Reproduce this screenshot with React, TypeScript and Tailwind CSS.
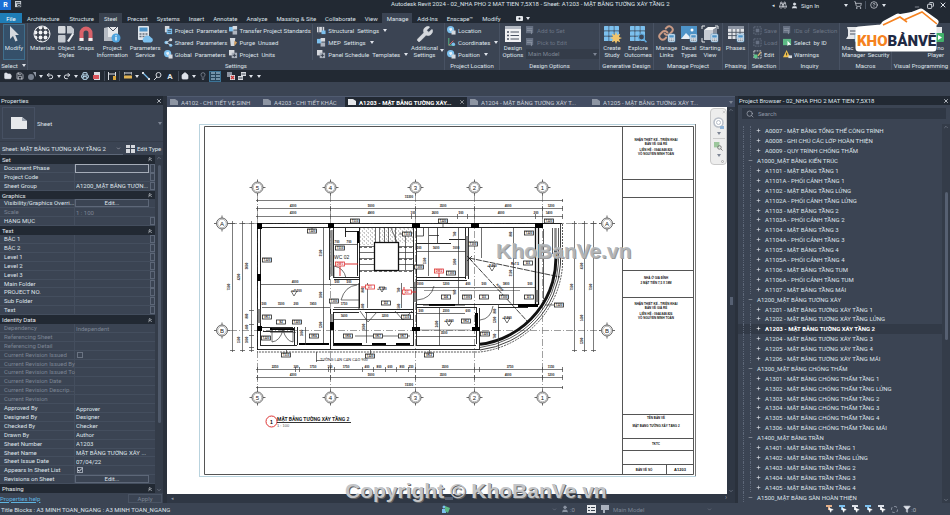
import React from "react";
import {
  Binoculars, Check, ChevronDown, ChevronUp, ChevronsUp, CircleHelp, Copy, Filter, FolderOpen, Home, Lightbulb,
  Link, Minus, MousePointer2, Plus, Printer, Redo2, Save, Search, ShoppingCart, Undo2, User, Wrench, X,
} from "lucide-react";

const Caret = ({ dim = false }: { dim?: boolean }) => (
  <svg viewBox="0 0 4 3" className={"h-[3px] w-1 shrink-0 " + (dim ? "fill-[#7d8594]" : "fill-[#dfe3ea]")}>
    <path d="M0 0h4L2 3z" />
  </svg>
);

/* ---------- large ribbon icons, 18 x 18 ---------- */
const G = "#d6d9de";
const B = "#7cc0ee";
const BadgeCalc = ({ x = 10, y = 9 }: { x?: number; y?: number }) => (
  <g transform={`translate(${x} ${y})`}>
    <rect width="7" height="8" rx="1" fill="#e8edf3" stroke="#4d93c8" strokeWidth=".6" />
    <rect x="1.2" y="1.2" width="4.6" height="2.4" fill="#4d93c8" />
    <path d="M1.2 5h4.6M1.2 6.6h4.6" stroke="#66717f" strokeWidth=".8" strokeDasharray="1.2 .5" />
  </g>
);
const gridCells = (color: string) =>
  [0, 1, 2].flatMap((r) => [0, 1, 2].map((c) => (
    <rect key={`${r}${c}`} x={1 + c * 5.2} y={1 + r * 5.2} width="4.6" height="4.6" rx=".6" fill={color} />
  )));
const bigIcons: Record<string, React.ReactNode> = {
  modify: <path d="M5 1v13l3-3 2.4 5.4 2.2-1L10.300 10H14z" fill={G} />,
  materials: (
    <>
      <defs>
        <pattern id="chk" width="5" height="5" patternUnits="userSpaceOnUse">
          <rect width="5" height="5" fill="#39404c" />
          <circle cx="2.500" cy="2.500" r="1.900" fill="#f2f3f5" />
        </pattern>
      </defs>
      <circle cx="9" cy="9" r="8" fill="url(#chk)" stroke="#e3e5e9" strokeWidth="1" />
    </>
  ),
  styles: (
    <>
      <rect x="1" y="1" width="7.500" height="7.500" rx="1" fill={G} />
      <path d="M10 1h4l3 3v4.500h-7z" fill="#c3c8cf" />
      <rect x="1" y="10" width="7.500" height="7.500" rx="1" fill="#c3c8cf" />
      <path d="M10 16l5.500-8 1.500 1-5 8z" fill="#eef0f3" />
    </>
  ),
  snaps: (
    <>
      <path d="M4.500 16V8a4.500 4.500 0 0 1 9 0v8" fill="none" stroke="#d9626a" strokeWidth="4" />
      <path d="M2.500 14.500h4M11.500 14.500h4" stroke="#f0f0f0" strokeWidth="3" />
    </>
  ),
  info: (
    <>
      <path d="M1 3l4-1h10l-3 3v11H1z" fill="#b6bbc3" />
      <path d="M5 2h10v10H5z" fill="#e6e8eb" />
      <path d="M6 2l4 4 4-4" stroke="#4a5261" fill="none" />
      <circle cx="13" cy="13" r="4.500" fill="#4fa3dd" />
      <path d="M13 12v3.500M13 10.300v1" stroke="#fff" strokeWidth="1.300" />
    </>
  ),
  service: (
    <>
      <rect x="2" y="1" width="11" height="14" rx="1" fill="#dfe4ea" />
      <rect x="3.500" y="2.500" width="8" height="4" fill="#4d93c8" />
      <path d="M3.500 9h8M3.500 11.500h8" stroke="#66717f" strokeWidth="1.300" strokeDasharray="2 1" />
      <path d="M8 17.500a3 3 0 0 1 0-5 4 4 0 0 1 7 0 2.600 2.600 0 0 1 0 5z" fill={B} />
    </>
  ),
  options: (
    <>
      <rect x="1" y="1" width="16" height="16" fill="#f0f1f3" />
      <rect x="1" y="1" width="16" height="3" fill="#b4bac4" />
      <path d="M3 7h2M3 10.500h2M3 14h2" stroke="#4a5261" strokeWidth="1.500" />
      <path d="M6.500 7H15M6.500 10.500H15M6.500 14H15" stroke="#4a5261" strokeWidth="1" />
    </>
  ),
  study: (
    <>
      {gridCells(B)}
      <path d="M13 7l1.200 3 3-1.200L16 12l3 1-3 1.200 1.200 3-3-1.200L13 19l-1.200-3-3 1.200L10 14l-3-1 3-1.200L8.800 8.800l3 1.200z" fill="#f0c46c" />
    </>
  ),
  explore: (
    <>
      {gridCells(B)}
      <circle cx="12.500" cy="12" r="3" fill="#3d4656" stroke="#5fa9dc" strokeWidth="1.200" />
      <path d="M14.800 14.500l2.700 2.700" stroke="#5fa9dc" strokeWidth="1.600" />
    </>
  ),
  decal: (
    <>
      <rect x="1" y="1" width="16" height="13" fill="#4d93c8" />
      <path d="M1 14l5-6 4 4 3-2 4 4z" fill="#e7eef5" />
      <circle cx="12" cy="5" r="1.500" fill="#fff" />
      <BadgeCalc />
    </>
  ),
  starting: (
    <>
      <path d="M3 5l4-3h9l-4 3z" fill="#f3f4f6" />
      <path d="M3 5h9v10H3z" fill="#c8ccd3" />
      <path d="M12 5l4-3v9l-4 4z" fill="#8b93a0" />
      <path d="M1 4V1h3M14 1h3v3M1 13v4h3" stroke="#e5e7ea" fill="none" />
      <BadgeCalc />
    </>
  ),
  phases: (
    <>
      <rect x="1" y="1" width="16" height="13" fill="#e2e4e8" />
      <rect x="1" y="1" width="16" height="3" fill="#8d95a3" />
      <path d="M1 7.300h16M1 10.600h16M5 4v10M9 4v10M13 4v10" stroke="#4a5261" strokeWidth=".9" />
      <BadgeCalc />
    </>
  ),
  macro: (
    <>
      <path d="M2 2h12l-2 3v9H1l2-3V5z" fill="#e4e6e9" />
      <path d="M5 6h6M5 9h6" stroke="#4a5261" />
      <BadgeCalc />
    </>
  ),
  player: (
    <>
      <rect x="1" y="2" width="14" height="14" fill="#e4e6e9" />
      <rect x="8" y="8" width="9" height="9" rx="1" fill="#41b06a" />
      <path d="M11 10l4 2.500-4 2.500z" fill="#fff" />
    </>
  ),
};
const BigIcon = ({ name }: { name: string }) => {
  if (name === "wrench") return <Wrench className="size-[18px] fill-[#d6d9de] text-[#d6d9de]" strokeWidth={1} />;
  if (name === "links")
    return (
      <span className="relative size-[18px]">
        <Link className="size-4 text-[#c99a85]" strokeWidth={3} />
        <svg viewBox="0 0 18 18" className="absolute inset-0 size-[18px]"><BadgeCalc /></svg>
      </span>
    );
  return <svg viewBox="0 0 18 18" className="size-[18px] overflow-visible">{bigIcons[name]}</svg>;
};

/* ---------- small ribbon icons, 10 x 10 ---------- */
const smallIcons: Record<string, React.ReactNode> = {
  doc: <><rect x="1" y="0" width="5" height="7" fill={G} /><rect x="3" y="3" width="6" height="6" fill={B} /><path d="M4 5h4M4 7h4" stroke="#39424f" strokeWidth=".8" /></>,
  share: <><circle cx="2.500" cy="5" r="2" fill={B} /><circle cx="7.500" cy="2" r="1.700" fill={G} /><circle cx="7.500" cy="8" r="1.700" fill={B} /><path d="M2 5l6-3M2 5l6 3" stroke={G} /></>,
  globe: <><circle cx="4" cy="4" r="4" fill={B} /><path d="M2 3l3-1 1 2-2 2z" fill="#e7f2fa" /><rect x="5" y="5" width="4.500" height="4.500" fill={G} /></>,
  transfer: <><rect x="0" y="1" width="5" height="5" fill={B} /><rect x="4" y="0" width="5" height="4" fill={G} /><rect x="4" y="5" width="5" height="4.500" fill="#aeb4be" /></>,
  purge: <><path d="M1 0h6l-1 9H2z" fill={G} /><path d="M6 3l3 2-3 4z" fill="#d8a05c" /></>,
  units: <><rect x="0" y="0" width="6" height="6" fill={G} /><rect x="3" y="3" width="6" height="6" fill="#a9b0bb" /><path d="M4 6h4M6 4v4" stroke="#39424f" /></>,
  frame: <><rect x="0" y="1" width="8" height="6" fill={G} /><path d="M2 1v8M6 1v8" stroke="#566072" /><rect x="5" y="5" width="4.500" height="4" fill={B} /></>,
  coord: <><path d="M2 0v8h7" stroke="#5ec48b" fill="none" /><path d="M2 8l5-5" stroke="#d66" /><circle cx="7" cy="7" r="2" fill={B} /></>,
  dimSet: <><rect x="0" y="0" width="8" height="8" fill="#667082" /><path d="M1 3h6M1 5h6M6 5v4" stroke="#8a92a0" /></>,
  edit: <><rect x="1" y="1" width="8" height="8" fill="none" stroke={G} strokeDasharray="2 1" /><rect x="1" y="5" width="4" height="4" fill="#5ec48b" /><path d="M5 6l3-4 1 1-3 4z" fill="#e3b870" /></>,
  dimEdit: <><rect x="1" y="1" width="8" height="8" fill="none" stroke="#667082" strokeDasharray="2 1" /><rect x="3" y="3" width="4" height="4" fill="#667082" /></>,
  select: <><rect x="0" y="1" width="9" height="7" fill="#5cb985" /><path d="M5 3v6l1.500-1.500H9z" fill="#fff" /></>,
  warn: <><path d="M4 0l4 8H0z" fill="#f0c04c" /><path d="M4 3v3" stroke="#333" /><rect x="6" y="6" width="4" height="3" fill={G} /></>,
};
const SmallIcon = ({ name }: { name: string }) => (
  <svg viewBox="0 0 10 10" className="size-[9px] shrink-0">{smallIcons[name]}</svg>
);

const Big = ({ icon, lines, width, active = false, align = "items-center" }: { icon: string; lines: string[]; width: string; active?: boolean; align?: string }) => (
  <button className={`flex h-9 flex-col items-center whitespace-nowrap text-center leading-[7px] ${width} ${active ? "border border-[#3f6e8c] bg-[#35506a]" : "pt-px"}`}>
    <BigIcon name={icon} />
    <span className={`mt-px flex flex-col ${align}`}>{lines.map((l) => <span key={l} className="min-h-[7px]">{l}</span>)}</span>
  </button>
);
const Small = ({ icon, text, caret = false, dim = false }: { icon: string; text: string; caret?: boolean; dim?: boolean }) => (
  <button className={"flex h-3 items-center gap-[2px] whitespace-pre " + (dim ? "text-[#6b7484]" : "")}>
    <SmallIcon name={icon} />
    <span>{text}</span>
    {caret && <span className="pl-[2px]"><Caret /></span>}
  </button>
);
const Group = ({ label, width, children }: { label: string; width: string; children: React.ReactNode }) => (
  <section className={`flex shrink-0 flex-col overflow-hidden border-r border-[#485263] ${width}`} aria-label={label}>
    <div className="flex h-[37px] pt-px">{children}</div>
    <div className="flex h-[10px] items-center justify-center gap-1 whitespace-nowrap">{label}{label === "Select" && <Caret />}</div>
  </section>
);

const Ribbon = () => (
  <div className="flex h-[47px] shrink-0 overflow-hidden bg-[#3b4453]">
    <Group label="Select" width="w-7">
      <div className="pl-[3px]"><Big icon="modify" lines={["Modify"]} width="w-[22px]" active /></div>
    </Group>
    <Group label="Settings" width="w-[417px]">
      <Big icon="materials" lines={["Materials"]} width="w-[29px]" />
      <Big icon="styles" lines={["Object", "Styles"]} width="w-[19px]" />
      <Big icon="snaps" lines={["Snaps"]} width="w-[20px]" />
      <Big icon="info" lines={["Project", "Information"]} width="w-[33px]" />
      <Big icon="service" lines={["Parameters", "Service"]} width="w-[33px]" />
      <div className="flex w-[67px] flex-col pl-[2px]">
        <Small icon="doc" text="Project  Parameters" />
        <Small icon="share" text="Shared  Parameters" />
        <Small icon="globe" text="Global  Parameters" />
      </div>
      <div className="flex w-[85px] flex-col border-r border-[#485263]">
        <Small icon="transfer" text="Transfer Project Standards" />
        <Small icon="purge" text="Purge  Unused" />
        <Small icon="units" text="Project  Units" />
      </div>
      <div className="flex w-[96px] flex-col pl-1">
        <Small icon="frame" text="Structural  Settings" caret />
        <Small icon="transfer" text="MEP  Settings" caret />
        <Small icon="units" text="Panel Schedule  Templates" caret />
      </div>
      <Big icon="wrench" lines={["Additional", "Settings"]} width="w-[31px]" />
      <div className="flex items-end pb-2"><Caret /></div>
    </Group>
    <Group label="Project Location" width="w-[55px]">
      <div className="flex flex-col pl-[2px]">
        <Small icon="globe" text="Location" />
        <Small icon="coord" text="Coordinates" caret />
        <Small icon="globe" text="Position" caret />
      </div>
    </Group>
    <Group label="Design Options" width="w-[100px]">
      <Big icon="options" lines={["Design", "Options"]} width="w-[26px]" />
      <div className="flex flex-1 flex-col">
        <Small icon="dimSet" text="Add to Set" dim />
        <Small icon="dimSet" text="Pick to Edit" dim />
        <div className="relative flex h-3 items-center">
          <select aria-label="Active design option" className="h-[10px] w-full appearance-none bg-[#343c49] pl-[2px] text-[6px] leading-[10px] text-[#7d8594]">
            <option>Main Model</option>
          </select>
          <span className="absolute right-[2px]"><Caret dim /></span>
        </div>
      </div>
    </Group>
    <Group label="Generative Design" width="w-[54px]">
      <Big icon="study" lines={["Create", "Study"]} width="w-[24px]" />
      <Big icon="explore" lines={["Explore", "Outcomes"]} width="w-[28px]" />
    </Group>
    <Group label="Manage Project" width="w-[69px]">
      <Big icon="links" lines={["Manage", "Links"]} width="w-[25px]" />
      <Big icon="decal" lines={["Decal", "Types"]} width="w-[20px]" />
      <Big icon="starting" lines={["Starting", "View"]} width="w-[22px]" />
    </Group>
    <Group label="Phasing" width="w-[26px]">
      <Big icon="phases" lines={["Phases"]} width="w-[25px]" />
    </Group>
    <Group label="Selection" width="w-[31px]">
      <div className="flex flex-col pl-1">
        <Small icon="dimEdit" text="Save" dim />
        <Small icon="dimEdit" text="Load" dim />
        <Small icon="edit" text="Edit" />
      </div>
    </Group>
    <Group label="Inquiry" width="w-[60px]">
      <div className="flex flex-col pl-[3px]">
        <Small icon="dimSet" text="IDs of  Selection" dim />
        <Small icon="select" text="Select  by ID" />
        <Small icon="warn" text="Warnings" />
      </div>
    </Group>
    <Group label="Macros" width="w-[52px]">
      <Big icon="macro" lines={["Mac", "Manager"]} width="w-[27px]" align="items-start" />
      <Big icon="macro" lines={["", "Security"]} width="w-[23px]" />
    </Group>
    <Group label="Visual Programming" width="w-[59px]">
      <span className="w-[30px]" />
      <Big icon="player" lines={["no", "Player"]} width="w-[29px]" align="items-end" />
    </Group>
  </div>
);

const menuTabs = ["Architecture", "Structure", "Steel", "Precast", "Systems", "Insert", "Annotate", "Analyze", "Massing & Site", "Collaborate", "View", "Manage", "Add-Ins", "Enscape™", "Modify"];

const TitleBar = () => (
  <header className="flex h-[13px] shrink-0 items-start bg-[#222933]">
    <div className="flex w-[391px] items-start gap-1">
      <span className="flex h-[10px] w-[11px] items-center justify-center bg-[#1c6fd6] text-[7px] font-bold text-white">R</span>
      <svg viewBox="0 0 8 8" className="mt-[1px] size-[7px]"><path d="M0 0h7v7H0z" fill="#c9ced6" /><path d="M1 2h5M3 4h3v2H3z" stroke="#222933" fill="none" /></svg>
    </div>
    <h1 className="h-[9px] whitespace-nowrap leading-[8px]">Autodesk Revit 2024 - 02_NHA PHO 2 MAT TIEN 7,5X18 - Sheet: A1203 - MẶT BẰNG TƯỜNG XÂY TẦNG 2</h1>
    <div className="ml-auto flex h-[10px] items-center pr-[3px]">
      <button aria-label="Collapse search" className="w-[7px] text-[5px]">◂</button>
      <button aria-label="Find" className="w-3"><Binoculars className="mx-auto size-2" /></button>
      <button className="flex w-[55px] items-center gap-[3px] pl-[2px]"><User className="size-[7px] fill-current" />Sign In</button>
      <button aria-label="Account menu" className="w-[10px]"><Caret /></button>
      <button aria-label="Cart" className="w-3 border-r border-[#4a5362]"><ShoppingCart className="size-2" /></button>
      <button aria-label="Help" className="w-[14px] pl-1"><CircleHelp className="size-2" /></button>
      <button aria-label="Help menu" className="w-[34px] pl-[2px]"><Caret /></button>
      <button aria-label="Minimize" className="w-[13px]"><Minus className="mt-1 size-[6px]" /></button>
      <button aria-label="Restore" className="w-3"><Copy className="size-[7px] -scale-x-100" strokeWidth={3} /></button>
      <button aria-label="Close" className="w-2"><X className="size-2" strokeWidth={3} /></button>
    </div>
  </header>
);

const MenuBar = () => (
  <nav className="flex h-[10px] shrink-0 items-stretch whitespace-nowrap bg-[#222933]">
    <button className="w-[22px] bg-[#1f7db6] text-white">File</button>
    {menuTabs.map((t, i) => (
      <button key={t} className={"pl-[5px] " + (i < 3 ? "pr-[5px] " : "pr-1 ") + (t === "Steel" ? "bg-[#39414e]" : t === "Manage" ? "bg-[#3b4453]" : "")}>{t}</button>
    ))}
    <button aria-label="Display options" className="flex items-center gap-[3px] pl-[11px]">
      <svg viewBox="0 0 7 5" className="h-[5px] w-[7px]"><rect width="7" height="5" rx="1" fill="#e5e8ec" /><circle cx="3.500" cy="2.500" r="1" fill="#222933" /></svg>
      <Caret />
    </button>
  </nav>
);

const Tool = ({ label, width, on = false, children }: { label: string; width: string; on?: boolean; children: React.ReactNode }) => (
  <button aria-label={label} className={`flex h-[11px] items-center justify-center ${width} ${on ? "border border-[#3b7396] bg-[#27445a]" : ""}`}>{children}</button>
);
const Rule = ({ width }: { width: string }) => <span className={`flex h-[10px] justify-center ${width}`}><span className="w-px bg-[#434c5a]" /></span>;

const QuickAccess = () => (
  <div className="flex h-3 shrink-0 items-center bg-[#222933] pl-[2px]">
    <Tool label="Open" width="w-3"><FolderOpen className="size-2 fill-[#dfe3ea]" /></Tool>
    <Tool label="Save" width="w-3"><Save className="size-2" /></Tool>
    <Tool label="Synchronize" width="w-3"><svg viewBox="0 0 8 8" className="size-2"><circle cx="3" cy="5" r="3" fill="#78818f" /><path d="M5 0h3v5z" fill="#9098a5" /></svg></Tool>
    <Tool label="Synchronize menu" width="w-[6px]"><Caret /></Tool>
    <Tool label="Undo" width="w-3"><Undo2 className="size-2" strokeWidth={3} /></Tool>
    <Tool label="Undo menu" width="w-[5px]"><Caret /></Tool>
    <Tool label="Redo" width="w-3"><Redo2 className="size-2" strokeWidth={3} /></Tool>
    <Tool label="Redo menu" width="w-[6px]"><Caret /></Tool>
    <Tool label="Print" width="w-3"><Printer className="size-2 text-[#bfe0f5]" strokeWidth={3} /></Tool>
    <Tool label="Export PDF" width="w-[11px]"><svg viewBox="0 0 8 8" className="size-2"><path d="M1 0h6v8H1z" fill="#dadde2" /><path d="M0 3h6v4H0z" fill="#d8535a" /></svg></Tool>
    <Rule width="w-1" />
    <Tool label="Aligned dimension" width="w-[11px]"><svg viewBox="0 0 8 8" className="size-2"><path d="M.5 0v8M7.500 0v5M0 2h8" stroke={G} fill="none" /><path d="M5 4h3v4H5z" fill="#d9a63c" /></svg></Tool>
    <Rule width="w-1" />
    <Tool label="Measure" width="w-[13px]"><svg viewBox="0 0 8 8" className="size-2"><path d="M0 1h8M0 0v3M8 0v3" stroke={G} /><rect y="3.500" width="8" height="3" fill="#e0b355" /></svg></Tool>
    <Tool label="Measure menu" width="w-[6px]"><Caret /></Tool>
    <Tool label="Detail line" width="w-3"><svg viewBox="0 0 8 8" className="size-2"><path d="M1 1l6 6" stroke="#7cc0ee" strokeWidth="1.200" /><rect width="2" height="2" fill={G} /><rect x="6" y="6" width="2" height="2" fill={G} /></svg></Tool>
    <Tool label="Tag" width="w-3"><svg viewBox="0 0 8 8" className="size-2"><circle cx="4.500" cy="3" r="2.500" fill="none" stroke={G} /><path d="M0 8l3-3" stroke={G} /></svg></Tool>
    <Tool label="Text" width="w-3"><span className="text-[8px] font-bold">A</span></Tool>
    <Rule width="w-1" />
    <Tool label="Default 3D view" width="w-[10px]"><Home className="size-2 fill-[#dfe3ea]" /></Tool>
    <Tool label="3D menu" width="w-[7px]"><Caret /></Tool>
    <Tool label="Section" width="w-3"><Lightbulb className="size-2 text-[#9aa2af]" /></Tool>
    <Tool label="Thin lines" width="w-[12px]" on><svg viewBox="0 0 9 8" className="h-2 w-[9px]"><path d="M0 1h4M5 1h4M0 4h4M5 4h4M0 7h4M5 7h4" stroke="#bfe0f5" strokeWidth="1.200" /></svg></Tool>
    <span className="w-1" />
    <Tool label="Close inactive" width="w-[11px]"><svg viewBox="0 0 8 8" className="size-2"><path d="M0 0h5v5H0z" fill="#8b93a0" /><path d="M3 3h5v5H3z" fill={G} /><path d="M4 4l3 3M7 4L4 7" stroke="#c33" strokeWidth="1.200" /></svg></Tool>
    <Tool label="Switch windows" width="w-3"><svg viewBox="0 0 8 8" className="size-2"><path d="M3 0h5v4H3zM0 4h5v4H0z" fill={G} /><path d="M3.500 2h4M.5 6h4" stroke="#39424f" /></svg></Tool>
    <Tool label="Windows menu" width="w-[6px]"><Caret /></Tool>
    <Tool label="Customize" width="w-[10px]"><Caret /></Tool>
  </div>
);

/* ---------- properties palette ---------- */
type Row = { l: string; v?: string; k?: "head" | "edit" | "check" | "dim" | "dimcheck"; b?: boolean; active?: boolean };
const rows: Row[] = [
  { l: "Set", k: "head" },
  { l: "Document Phase", b: true, active: true }, { l: "Project Code", b: true }, { l: "Sheet Group", v: "A1200_MẶT BẰNG TƯỜN...", b: true },
  { l: "Graphics", k: "head" },
  { l: "Visibility/Graphics Overri...", k: "edit" }, { l: "Scale", v: "1 : 100", k: "dim" }, { l: "HẠNG MỤC", b: true },
  { l: "Text", k: "head" },
  { l: "BẬC 1", b: true }, { l: "BẬC 2", b: true }, { l: "Level 1", b: true }, { l: "Level 2", b: true }, { l: "Level 3", b: true },
  { l: "Main Folder", b: true }, { l: "PROJECT NO.", b: true }, { l: "Sub Folder", b: true }, { l: "Text", b: true },
  { l: "Identity Data", k: "head" },
  { l: "Dependency", v: "Independent", k: "dim" }, { l: "Referencing Sheet", k: "dim" }, { l: "Referencing Detail", k: "dim" },
  { l: "Current Revision Issued", k: "dimcheck" }, { l: "Current Revision Issued By", k: "dim" }, { l: "Current Revision Issued To", k: "dim" },
  { l: "Current Revision Date", k: "dim" }, { l: "Current Revision Descrip...", k: "dim" }, { l: "Current Revision", k: "dim" },
  { l: "Approved By", v: "Approver" }, { l: "Designed By", v: "Designer" }, { l: "Checked By", v: "Checker" }, { l: "Drawn By", v: "Author" },
  { l: "Sheet Number", v: "A1203" }, { l: "Sheet Name", v: "MẶT BẰNG TƯỜNG XÂY ..." }, { l: "Sheet Issue Date", v: "07/04/22" },
  { l: "Appears In Sheet List", k: "check" }, { l: "Revisions on Sheet", k: "edit" },
  { l: "Phasing", k: "head" },
];

const PropertyRow = ({ row, index }: { row: Row; index: number }) => {
  const id = `prop-${index}`;
  if (row.k === "head")
    return (
      <div className="flex min-h-0 items-center justify-between bg-[#222933] pl-[2px] pr-[2px] text-[#e6e9ee]">
        {row.l}<ChevronsUp className="size-[6px]" strokeWidth={3} />
      </div>
    );
  const dim = row.k === "dim" || row.k === "dimcheck";
  return (
    <div className={"grid min-h-0 grid-cols-[75px_74px_6px] items-stretch border-b border-[#444e5e] leading-[8px] " + (dim ? "text-[#7b8493]" : "text-[#dfe3ea]")}>
      <label htmlFor={id} className="whitespace-nowrap border-r border-[#444e5e] pl-1">{row.l}</label>
      {row.k === "edit" ? (
        <button id={id} className="border border-[#5d6778] text-center leading-[6px]">Edit...</button>
      ) : row.k === "check" || row.k === "dimcheck" ? (
        <span className="relative flex items-center pl-[2px]">
          <input id={id} type="checkbox" defaultChecked={row.k === "check"} className={"size-[6px] appearance-none border " + (dim ? "border-[#6a7382]" : "border-[#9aa2af]")} />
          {row.k === "check" && <Check className="pointer-events-none absolute left-[2px] size-[6px]" strokeWidth={4} />}
        </span>
      ) : (
        <input id={id} defaultValue={row.v ?? ""} readOnly={dim} className={"h-full min-w-0 bg-transparent pl-px text-[6px] leading-[8px] outline-none " + (row.active ? "border border-[#a5acb8]" : "")} />
      )}
      {row.b ? <button aria-label={`Associate ${row.l}`} className="ml-px border border-[#5d6778]" /> : <span />}
    </div>
  );
};

const Properties = () => (
  <aside className="flex w-[163px] shrink-0 flex-col bg-[#3b4453]" aria-label="Properties">
    <div className="flex h-[9px] items-center justify-between bg-[#222933] px-px">Properties<button aria-label="Close properties"><X className="size-[6px]" strokeWidth={3} /></button></div>
    <div className="flex h-[36px] items-center pl-[2px] pr-px">
      <span className="flex h-8 w-[33px] items-center justify-center border border-[#465062]">
        <svg viewBox="0 0 16 12" className="h-3 w-4"><path d="M0 0h11l5 4v8H0z" fill="#e6e8eb" /><path d="M11 0v4h5" fill="#9aa2af" /></svg>
      </span>
      <span className="flex-1 pl-[2px]">Sheet</span><Caret dim />
    </div>
    <div className="flex h-[14px] items-center border-t border-[#343c49]">
      <div className="relative ml-px flex w-[122px] items-center border-b border-[#5d6778]">
        <select aria-label="Instance" className="h-[11px] w-full appearance-none bg-transparent pl-px text-[6px] text-[#dfe3ea]"><option>Sheet: MẶT BẰNG TƯỜNG XÂY TẦNG 2</option></select>
        <ChevronDown className="pointer-events-none absolute right-[2px] size-[5px]" />
      </div>
      <button className="flex items-center gap-[2px] whitespace-nowrap pl-[3px]">
        <svg viewBox="0 0 9 8" className="h-2 w-[9px]"><path d="M0 0h4v3H0zM0 4h4v4H0zM5 0h4v3H5zM5 4h4v4H5z" fill={G} /></svg>Edit Type
      </button>
    </div>
    <div className="flex min-h-0 flex-1">
      <div className="grid min-w-0 flex-1 auto-rows-fr">
        {rows.map((r, i) => <PropertyRow key={i} row={r} index={i} />)}
      </div>
      <div className="flex w-2 flex-col items-center bg-[#343c49]">
        <ChevronUp className="size-[6px] shrink-0 text-[#8d95a3]" />
        <span className="mt-1 h-[258px] w-[3px] rounded bg-[#4f596a]" />
        <ChevronDown className="mt-auto size-[6px] shrink-0 text-[#8d95a3]" />
      </div>
    </div>
    <div className="flex h-[10px] shrink-0 items-center justify-between pr-px">
      <a href="#help" className="text-[#5fb4e0] underline">Properties help</a>
      <button className="h-[9px] w-[34px] border border-[#4a5464] leading-[7px] text-[#7b8493]">Apply</button>
    </div>
  </aside>
);

/* ---------- sheet drawing ---------- */
const axes = [[257, "5"], [330, "4"], [415, "3"], [474, "2"], [542, "1"]] as const;
const Bubble = ({ x, y, t }: { x: number; y: number; t: string }) => (
  <g stroke="#444" fill="#fff" strokeWidth=".8">
    <path d={`M${x - 8} ${y}h16M${x} ${y - 8}v16`} />
    <circle cx={x} cy={y} r="5.500" />
    <circle cx={x} cy={y} r="4.300" strokeWidth=".4" />
    <text x={x} y={y + 2} fontSize="6" textAnchor="middle" fill="#222" stroke="none">{t}</text>
  </g>
);
const dims: [number, number, string][] = [
  [409, 198, "15300"], [293, 207, "4300"], [371, 207, "5000"], [443, 207, "3500"], [508, 207, "4000"], [551, 207, "1200"],
  [293, 214, "4300"], [371, 214, "4900"], [413, 214, "100"], [435, 214, "2600"], [461, 214, "500"], [501, 214, "4000"], [536, 214, "200"], [549, 214, "1400"],
  [275, 368, "2250"], [296, 368, "300"], [313, 368, "1750"], [330, 368, "100"], [346, 368, "1750"], [367, 368, "400"], [379, 368, "800"], [390, 368, "600"], [402, 368, "800"], [411, 368, "250"],
  [445, 368, "3500"], [510, 368, "3750"], [551, 368, "1150"],
  [293, 376, "4300"], [371, 376, "5000"], [443, 376, "3500"], [508, 376, "4000"], [551, 376, "1200"], [409, 386, "15300"],
  [264, 305, "500"], [281, 305, "1500"], [296, 305, "200"], [313, 305, "1950"], [344, 305, "1750"], [295, 283, "4000"], [337, 283, "500"], [349, 283, "500"],
  [344, 317, "1600"], [385, 317, "3200"], [337, 243, "700"], [349, 243, "700"],
  [419, 249, "500"], [436, 249, "1600"], [456, 249, "1000"], [420, 285, "1000"], [446, 285, "1200"], [468, 285, "400"], [484, 285, "500"], [506, 285, "1800"], [530, 285, "500"],
  [421, 312, "500"], [446, 312, "2300"], [468, 312, "600"], [444, 334, "3500"],
];
const vdims: [number, number, string][] = [
  [230, 287, "7500"], [240, 277, "4200"], [248, 266, "3600"], [240, 340, "1500"], [248, 316, "800"], [248, 327, "400"], [248, 340, "1000"],
  [322, 253, "3100"], [322, 295, "1000"], [322, 325, "1200"], [303, 333, "1000"], [365, 327, "1600"], [364, 290, "800"], [400, 290, "700"], [364, 306, "400"], [400, 306, "500"],
  [438, 324, "2400"], [456, 234, "700"], [456, 262, "1800"], [426, 261, "1500"], [512, 234, "800"], [512, 273, "3100"], [496, 311, "800"], [496, 320, "1200"], [496, 336, "700"], [456, 292, "900"],
  [573, 287, "7500"], [583, 266, "4500"], [592, 287, "7500"], [583, 318, "1400"], [583, 341, "1200"],
];
const tags: [number, number, string, string?][] = [
  [312, 231, "T220"], [267, 260, "T220"], [355, 221, "T110"], [340, 248, "T110"], [407, 234, "T110"], [334, 301, "T100"], [386, 303, "D2"], [281, 322, "S2"], [297, 322, "T220"], [267, 317, "VK1"], [266, 338, "T220"],
  [314, 336, "VK6"], [348, 336, "VK6"], [378, 336, "VK7"], [403, 336, "VK7"], [286, 355, "T110"], [370, 356, "T220"], [406, 317, "T110"],
  [340, 264, "DW1", "r"], [370, 287, "D1", "r"], [407, 292, "D1'", "r"], [439, 271, "DW2", "r"],
  [443, 221, "T220"], [549, 221, "T220"], [473, 244, "T100"], [529, 233, "T220"], [419, 267, "T100"], [451, 273, "T100"], [528, 263, "D3"], [446, 297, "D4"], [467, 297, "T100"], [484, 297, "D3"], [504, 297, "T100"], [529, 297, "D1"],
  [559, 305, "T220"], [466, 321, "VK2"], [485, 334, "T220"], [429, 355, "VK3"],
];
const tb: [number, string][] = [
  [141, "NHẬN THIẾT KẾ - TRIỂN KHAI"], [145, "BẢN VẼ GIÁ RẺ"], [151, "LIÊN HỆ : 0944.848.826"], [155, "VÕ NGUYỄN MINH TOÀN"],
  [279, "NHÀ Ở GIA ĐÌNH"], [284, "2 MẶT TIỀN  7,5 X 18M"],
  [305, "NHẬN THIẾT KẾ - TRIỂN KHAI"], [309, "BẢN VẼ GIÁ RẺ"], [315, "LIÊN HỆ : 0944.848.826"], [319, "VÕ NGUYỄN MINH TOÀN"],
  [419, "TÊN BẢN VẼ"], [427, "MẶT BẰNG TƯỜNG XÂY TẦNG 2"], [445, "TKTC"],
];

const FloorPlan = () => (
  <svg viewBox="167 107 560 387" className="h-full w-full font-['Liberation_Sans',sans-serif]" role="img" aria-label="Sheet A1203">
    <defs>
      <pattern id="dots" width="4" height="4" patternUnits="userSpaceOnUse">
        <path d="M0 1h.8M2 3h.8M3 0h.6" stroke="#555" strokeWidth=".8" />
      </pattern>
    </defs>
    <rect x="199.500" y="124.500" width="496" height="352" fill="#fff" stroke="#b9d3de" />
    <path d="M695.500 124v352" stroke="#777" />
    <path d="M204.500 126.500h489v348h-489zM622.500 127v347M622.500 179.500h71M622.500 197.500h71M622.500 270.500h71M622.500 297.500h71M622.500 414.500h71M622.500 438.500h71M622.500 450.500h71M622.500 464.500h71M666.500 464v10" fill="none" stroke="#555" />
    {/* axis lines */}
    <g stroke="#777" strokeWidth=".7" strokeDasharray="7 2 1 2">
      {axes.map(([x]) => <path key={x} d={`M${x + 0.5} 195v195`} />)}
      <path d="M230 223.500h370M230 330.500h370" />
    </g>
    {axes.map(([x, t]) => <g key={t}><Bubble x={x + 0.5} y={187.5} t={t} /><Bubble x={x + 0.5} y={397.5} t={t} /></g>)}
    <Bubble x={222} y={223.5} t="A" /><Bubble x={607} y={223.5} t="A" />
    <Bubble x={222} y={330.5} t="B" /><Bubble x={607} y={330.5} t="B" />
    {/* dimension chains */}
    <g stroke="#444" strokeWidth=".7" fill="none">
      <path d="M256 200.500h307M256 208.500h307M256 216.500h307M256 369.500h307M256 377.500h307M256 387.500h307" />
      <path d="M232.500 221v131M242.500 221v131M251.500 221v131M574.500 221v131M584.500 221v131M593.500 221v131" />
      <path d="M257.500 199v3M562.500 199v3M257.500 386v3M562.500 386v3" />
      {[257, 330, 415, 474, 542, 562].map((x) => <path key={x} d={`M${x + 0.5} 206v5M${x + 0.5} 375v5M${x + 0.5} 214v5M${x + 0.5} 367v5`} />)}
      {[295, 299, 328, 334, 362, 373, 385, 396, 408, 479].map((x) => <path key={x} d={`M${x + 0.5} 367v5`} />)}
      {[411, 457, 467, 535].map((x) => <path key={x} d={`M${x + 0.5} 214v5`} />)}
      {[223, 350].map((y) => <path key={y} d={`M230 ${y + 0.5}h5M240 ${y + 0.5}h5M249 ${y + 0.5}h5M572 ${y + 0.5}h5M582 ${y + 0.5}h5M591 ${y + 0.5}h5`} />)}
      {[310, 324, 335, 347].map((y) => <path key={y} d={`M249 ${y + 0.5}h5`} />)}
    </g>
    {/* stair core */}
    <path d="M359 228h16v17h-16zM380 228h33v15h-33z" fill="url(#dots)" />
    <g stroke="#333" strokeWidth=".7" fill="none">
      <path d="M359 246.500h15M399 246.500h14M359 252.500h15M399 252.500h14M359 258.500h15M399 258.500h14M359 264.500h15M399 264.500h14M359 270.500h15M399 270.500h14" />
      <path d="M375.500 228v15M379.500 228v15M384.500 228v15M388.500 228v15M391 228l6 14M395.500 228v15M399 234h8M405.500 236v34" />
      <path d="M359 247.500h54M359 259.500h54M359 271.500h54" strokeDasharray="3 2" />
      <rect x="374.500" y="242.500" width="24" height="28" fill="#fff" stroke="#111" strokeWidth="1.300" />
    </g>
    {/* walls */}
    <g stroke="#111" strokeWidth=".9" fill="none">
      <path d="M257.500 223.500h305M261 227.500h70M334 227.500h79M416 227.500h55M478 227.500h58" />
      <path d="M257.500 223v127M260.500 228v118" />
      <path d="M257 349.500h222M261 345.500h36M333 345.500h80M417 345.500h59" />
      <path d="M329.500 228v52M333.500 228v50M359.500 228v80M357.500 231v45" />
      <path d="M345 231.500h14M334 279.500h25M334 277.500h25M345.500 228v9" />
      <path d="M413.500 228v118M416.500 228v118" />
      <path d="M465.500 228v51M468.500 228v51M417 277.500h49M417 280.500h50M449 239.500h17M417 243.500h34" />
      <path d="M330.500 309v40M333.500 312v33M333 309.500h80M333 312.500h26M365 312.500h48M359 283v26" />
      <path d="M417 304.500h62M417 307.500h60M479 304.500h45M498 307.500h30" />
      <path d="M476.500 308v36M479.500 308v42M261 327.500h32M263 331.500h30M297.500 327v18M294.500 327v18" />
      <path d="M535.500 228v77M538.500 228v77" strokeWidth="1.300" />
      <path d="M423.500 228v8h-7M429 235.500h10M437.500 228v15" strokeWidth=".7" />
    </g>
    <g stroke="#888" strokeWidth="2.500" fill="none">
      <path d="M331.500 230v46M467 236v40M415 282v20M331.500 314v14M259 309v14M555.500 228v20M537 290v12" />
    </g>
    <g fill="#000">
      <path d="M257 223h5v6h-5zM328 223h6v5h-6zM412 223h8v5h-8zM471 223h8v5h-8zM535 223h8v5h-8zM257 274h4v7h-4zM257 326h5v5h-5zM330 322h4v8h-4zM412 327h8v4h-8zM472 327h8v4h-8zM518 304h20v3h-20z" />
      <path d="M299 343h30v2h-30zM334 343h28v2h-28zM372 343h14v2h-14zM396 343h14v2h-14zM270 328h24v2h-24zM357 231h2v12h-2zM475 313h3v14h-3zM429 304h26v2h-26z" />
    </g>
    {/* curved facade */}
    <g fill="none" stroke="#111">
      <path d="M555.600 250A87 87 0 0 1 480 344.300" strokeWidth="3" />
      <path d="M558.500 228v35A90 90 0 0 1 480 347.500" strokeWidth=".7" />
      <path d="M560.500 224v40A92 92 0 0 1 480 350" strokeWidth=".8" />
      <path d="M562.500 224v42A94 94 0 0 1 480 352H257" strokeWidth=".7" strokeDasharray="2 1" />
      <path d="M552.500 228v26M543.500 229v70" strokeWidth=".7" />
      <path d="M469 258l91 19M469 258l59 64" strokeWidth=".8" strokeDasharray="6 1" />
      <path d="M467 256l5 5M472 256l-5 5" strokeWidth=".7" />
    </g>
    {/* interior chains, door swings */}
    <g stroke="#333" strokeWidth=".7" fill="none">
      <path d="M261 284.500h98M262 307.500h68M334 307.500h25M334 244.500h23M334 319.500h79M323.500 228v115M367.500 283v25M401.500 283v25M366.500 313v30" />
      <path d="M417 251.500h49M410 287.500h125M417 313.500h48M417 336.500h60M439.500 308v37M458.500 228v76M428.500 228v48M513.500 228v76M498.500 304v46M481.500 228v30M305.500 327v18" />
      <path d="M272 330v12q8-1 11-12q3 11 10 12v-12M334 278v-12q10 2 12 12M357 285q-12 1-16 15h18M417 300q14-1 17-14M480 320q11-1 13-14M360 311l8 11 9-10M395 311l8 9 9-9" />
      <path d="M379 287l6 0-3 5zM291 291l6 0-3 5zM489 266l6 0-3 5zM446 321l6 0-3 5zM504 318l6 0-3 5z" />
      <path d="M316.500 362v-10M316 360.500h8M355.500 223v-2M443 223v4M286.500 349v4M370.500 349v5M429.500 349v4M312 228v2M355 336h55M545 305h9" />
      <path d="M272 328.500h22M423 305.500h42M424 290.500h30M460 290.500h60M270 332.500h26M420 330h50" strokeWidth=".5" />
    </g>
    <path d="M340 266v10M345 264h13M361 287h5M411 292h5M439 273v4M404 287v8" stroke="#d33" fill="none" />
    {tags.map(([x, y, t, r]) => (
      <g key={`${x}-${y}`}>
        <rect x={x - 4.500} y={y - 2} width="9" height="4" fill="#fff" stroke={r ? "#d33" : "#222"} strokeWidth=".8" />
        <text x={x} y={y + 1} fontSize="3" textAnchor="middle" fontWeight="700" fill={r ? "#d33" : "#222"}>{t}</text>
      </g>
    ))}
    <g fontSize="3" fontWeight="700" textAnchor="middle" fill="#111">
      {dims.map(([x, y, t]) => <text key={`${x}-${y}`} x={x} y={y}>{t}</text>)}
      {vdims.map(([x, y, t]) => <text key={`${x}-${y}`} x={x} y={y} transform={`rotate(-90 ${x} ${y})`}>{t}</text>)}
      <text x="382" y="290">+7.200</text><text x="297" y="292">+7.200</text><text x="492" y="267">+7.200</text><text x="449" y="322">+7.200</text><text x="507" y="319">+7.200</text>
      <text x="515" y="265">R=7.5</text><text x="499" y="288" transform="rotate(47 499 288)">R7500</text>
      {tb.map(([y, t]) => <text key={y} x="656" y={y}>{t}</text>)}
      <text x="644" y="471">BẢN VẼ SỐ</text><text x="680" y="471" fontSize="4">A1203</text>
    </g>
    <text x="334" y="259" fontSize="5" fill="#222">WC 02</text>
    <text x="320" y="361" fontSize="4" fill="#333" className="font-['Roboto',sans-serif]">TƯỜNG LAN CAN CAO 900</text>
    <circle cx="271.500" cy="421.500" r="5.500" fill="none" stroke="#d33" />
    <text x="271.500" y="423.500" fontSize="5" fontWeight="700" textAnchor="middle">1</text>
    <text x="277" y="421" fontSize="5" fontWeight="700" fill="#222" className="font-['Roboto',sans-serif]">MẶT BẰNG TƯỜNG XÂY TẦNG 2</text>
    <path d="M277 422.500h74" stroke="#333" />
    <text x="277" y="427" fontSize="4" fill="#555">1 : 100</text>
  </svg>
);

const SheetGlyph = ({ on = false }: { on?: boolean }) => (
  <svg viewBox="0 0 8 6" className="h-[6px] w-2 shrink-0"><path d="M0 0h5l3 2v4H0z" fill={on ? "#e6e8eb" : "#8d95a3"} /></svg>
);
const docTabs: [string, string][] = [
  ["A4102 - CHI TIẾT VỆ SINH", "w-[93px]"], ["A4203 - CHI TIẾT KHÁC", "w-[85px]"], ["A1203 - MẶT BẰNG TƯỜNG XÂY...", "w-[122px]"],
  ["A1204 - MẶT BẰNG TƯỜNG XÂY T...", "w-[122px]"], ["A1205 - MẶT BẰNG TƯỜNG XÂY T...", "w-[122px]"],
];

const Workspace = () => (
  <main className="flex min-w-0 flex-1 flex-col bg-[#2f3744]">
    <div className="flex h-[11px] shrink-0 items-stretch overflow-hidden border-t border-[#505b70] bg-[#434d62]">
      {docTabs.map(([t, w], i) => (
        <button key={t} className={`flex shrink-0 items-center gap-[3px] overflow-hidden whitespace-nowrap pl-[3px] ${w} ${i === 2 ? "bg-[#222933] font-bold text-white" : "text-[#c9ced8]"}`}>
          <SheetGlyph on={i === 2} />{t}{i === 2 && <X className="ml-auto mr-[2px] size-[6px]" />}
        </button>
      ))}
      <button aria-label="Tab list" className="ml-auto pr-[2px]"><Caret dim /></button>
    </div>
    <div className="flex min-h-0 flex-1">
      <div className="relative min-w-0 flex-1 bg-white">
        <FloorPlan />
        <div className="absolute right-0 top-[1px] flex h-[57px] w-[17px] flex-col items-center justify-between rounded border border-[#c9c9c9] bg-[#ededed] py-px text-[#8a8a8a]">
          <X className="size-[4px] self-end" />
          <svg viewBox="0 0 12 12" className="size-3"><circle cx="5.500" cy="5.500" r="4.500" fill="#fff" stroke="#b8bec8" strokeWidth="1.500" /><circle cx="5.500" cy="5.500" r="2" fill="none" stroke="#b8bec8" /><path d="M7 9h4v3H7z" fill="#8fb4d8" /></svg>
          <Caret dim />
          <span className="h-px w-3 bg-[#ccc]" />
          <svg viewBox="0 0 10 10" className="size-[9px]"><rect width="6" height="6" fill="#9cc79c" /><circle cx="6" cy="6" r="2" fill="none" stroke="#777" /><path d="M7.500 7.500l2 2" stroke="#777" /></svg>
          <Caret dim />
          <span className="mr-[2px] size-[3px] self-end rounded-full border border-[#aaa]" />
        </div>
      </div>
      <div className="flex w-2 flex-col items-center justify-between text-[#8d95a3]">
        <ChevronUp className="size-[6px]" />
        <span className="mt-[184px] h-2 w-[3px] bg-[#566072]" />
        <ChevronDown className="mt-auto size-[6px]" />
      </div>
    </div>
    <div className="flex h-[9px] shrink-0 items-center justify-between px-1 text-[#8d95a3]">
      <span className="text-[5px]">◂</span>
      <span className="h-[3px] w-2 bg-[#566072]" />
      <span className="pr-1 text-[7px]">›</span>
    </div>
  </main>
);

/* ---------- project browser ---------- */
const tree: [number, string][] = [
  [1, "A0007 - MẶT BẰNG TỔNG THỂ CÔNG TRÌNH"], [1, "A0008 - GHI CHÚ CÁC LỚP HOÀN THIỆN"], [1, "A0009 - QUY TRÌNH CHỐNG THẤM"],
  [0, "A1000_MẶT BẰNG KIẾN TRÚC"],
  [1, "A1101 - MẶT BẰNG TẦNG 1"], [1, "A1101A - PHỐI CẢNH TẦNG 1"], [1, "A1102 - MẶT BẰNG TẦNG LỬNG"], [1, "A1102A - PHỐI CẢNH TẦNG LỬNG"],
  [1, "A1103 - MẶT BẰNG TẦNG 2"], [1, "A1103A - PHỐI CẢNH TẦNG 2"], [1, "A1104 - MẶT BẰNG TẦNG 3"], [1, "A1104A - PHỐI CẢNH TẦNG 3"],
  [1, "A1105 - MẶT BẰNG TẦNG 4"], [1, "A1105A - PHỐI CẢNH TẦNG 4"], [1, "A1106 - MẶT BẰNG TẦNG TUM"], [1, "A1106A - PHỐI CẢNH TẦNG TUM"], [1, "A1107 - MẶT BẰNG TẦNG MÁI"],
  [0, "A1200_MẶT BẰNG TƯỜNG XÂY"],
  [1, "A1201 - MẶT BẰNG TƯỜNG XÂY TẦNG 1"], [1, "A1202 - MẶT BẰNG TƯỜNG XÂY TẦNG LỬNG"], [1, "A1203 - MẶT BẰNG TƯỜNG XÂY TẦNG 2"],
  [1, "A1204 - MẶT BẰNG TƯỜNG XÂY TẦNG 3"], [1, "A1205 - MẶT BẰNG TƯỜNG XÂY TẦNG 4"], [1, "A1206 - MẶT BẰNG TƯỜNG XÂY TẦNG MÁI"],
  [0, "A1300_MẶT BẰNG CHỐNG THẤM"],
  [1, "A1301 - MẶT BẰNG CHỐNG THẤM TẦNG 1"], [1, "A1302 - MẶT BẰNG CHỐNG THẤM TẦNG LỬNG"], [1, "A1303 - MẶT BẰNG CHỐNG THẤM TẦNG 2"],
  [1, "A1304 - MẶT BẰNG CHỐNG THẤM TẦNG 3"], [1, "A1305 - MẶT BẰNG CHỐNG THẤM TẦNG 4"], [1, "A1306 - MẶT BẰNG CHỐNG THẤM TẦNG MÁI"],
  [0, "A1400_MẶT BẰNG TRẦN"],
  [1, "A1401 - MẶT BẰNG TRẦN TẦNG 1"], [1, "A1402 - MẶT BẰNG TRẦN TẦNG LỬNG"], [1, "A1403 - MẶT BẰNG TRẦN TẦNG 2"], [1, "A1404 - MẶT BẰNG TRẦN TẦNG 3"], [1, "A1405 - MẶT BẰNG TRẦN TẦNG 4"],
  [0, "A1500_MẶT BẰNG SÀN HOÀN THIỆN"],
];

const Browser = () => (
  <aside className="flex w-[212px] shrink-0 flex-col bg-[#3b4453]" aria-label="Project Browser">
    <div className="flex h-[9px] shrink-0 items-center justify-between bg-[#222933] px-px">Project Browser - 02_NHA PHO 2 MAT TIEN 7,5X18<button aria-label="Close browser"><X className="size-[6px]" strokeWidth={3} /></button></div>
    <label className="mx-1 mb-[5px] mt-[3px] flex h-[11px] shrink-0 items-center gap-1 bg-[#2f3744] pl-1">
      <Search className="size-2 text-[#aab1bd]" />
      <input aria-label="Search" placeholder="Search" className="min-w-0 flex-1 bg-transparent text-[6px] outline-none placeholder:text-[#8d95a3]" />
    </label>
    <div className="flex min-h-0 flex-1">
      <ul className="grid min-w-0 flex-1 auto-rows-fr whitespace-nowrap pb-px pt-[2px]">
        {tree.map(([lv, t]) => {
          const on = lv === 1 && t.startsWith("A1203 ");
          return (
            <li key={t} className={"flex min-h-0 " + (on ? "bg-[#323a47] font-bold text-white" : "")}>
              <span className="ml-[5px] w-[7px] shrink-0 border-l border-dotted border-[#5d6778]" />
              {lv === 1 && <span className="w-[6px] shrink-0 border-l border-dotted border-[#5d6778]" />}
              <button className="flex items-center gap-1">
                {lv === 0 ? <Minus className="-ml-[2px] size-[5px]" /> : <Plus className="size-[5px]" strokeWidth={3} />}
                {t}
              </button>
            </li>
          );
        })}
      </ul>
      <div className="flex w-2 flex-col items-center bg-[#343c49] text-[#8d95a3]">
        <ChevronUp className="size-[6px] shrink-0" />
        <span className="mt-[62px] h-[148px] w-[3px] rounded bg-[#566072]" />
        <ChevronDown className="mt-auto size-[6px] shrink-0" />
      </div>
    </div>
  </aside>
);

const StatusBar = () => (
  <footer className="flex h-3 shrink-0 items-center bg-[#3b4453] pl-px">
    <span className="w-[440px] whitespace-nowrap">Title Blocks : A3 MINH TOAN_NGANG : A3 MINH TOAN_NGANG</span>
    <svg viewBox="0 0 10 8" className="h-2 w-[10px]"><circle cx="3" cy="2" r="1.500" fill={B} /><path d="M1 4h4v4H1z" fill={B} /><path d="M4 1l5 2-2 5-3-2z" fill="#5cb985" /></svg>
    <span className="w-[101px]" />
    <ChevronDown className="size-[5px] text-[#8d95a3]" />
    <span className="flex w-[30px] items-center gap-px pl-1 text-[#8d95a3]"><User className="size-2 fill-current" />:0</span>
    <svg viewBox="0 0 9 8" className="h-2 w-[9px]"><rect width="9" height="8" fill="#e6e8eb" /><path d="M1 2.500h2M4 2.500h4M1 5.500h2M4 5.500h4" stroke="#39424f" /></svg>
    <span className="flex w-[17px] justify-center"><svg viewBox="0 0 9 8" className="h-2 w-[9px]"><path d="M1 0h8v5H1zM3 5h2v3H3z" fill="#aab1bd" /></svg></span>
    <div className="relative flex items-center">
      <select aria-label="Design option" className="h-[10px] w-[101px] appearance-none bg-transparent text-[6px] text-[#7b8493]"><option>Main Model</option></select>
      <ChevronDown className="pointer-events-none absolute right-[2px] size-[5px] text-[#8d95a3]" />
    </div>
    <div className="ml-auto flex items-center gap-[5px] pr-[34px]">
      {["text-[#e3b08a]", "text-[#7cc0ee]", "text-[#dfe3ea]", "text-[#7cc0ee]", "text-[#dfe3ea]"].map((c, i) => (
        <button key={i} aria-label={`Selection filter ${i + 1}`} className="relative size-2">
          <svg viewBox="0 0 8 8" className={"size-2 " + c}><path d="M0 0h6v2H4v3H2V2H0z" fill="currentColor" /></svg>
          <MousePointer2 className="absolute left-[2px] top-[2px] size-[6px] fill-white text-white" />
        </button>
      ))}
      <span className="size-[7px] rounded-full border border-dashed border-[#8d95a3]" />
      <span className="flex items-center text-[#aab1bd]"><Filter className="size-2 fill-[#dfe3ea]" />:0</span>
    </div>
  </footer>
);

const Logo = () => (
  <div className="pointer-events-none absolute right-[11px] top-[8px]">
    <svg viewBox="0 0 88 44" className="h-[44px] w-[88px]">
      <path d="M34 16L47 9L53 11L70 4L84 14" fill="none" stroke="#fff" strokeWidth="7" strokeLinejoin="round" strokeLinecap="round" />
      <path d="M30 20L47 10L70 6L82 17V40H8V22z" fill="#fff" stroke="#fff" strokeWidth="7" strokeLinejoin="round" />
      <path d="M32 17L49 9L56 14M53 12L71 4L86 16" fill="none" stroke="#f58220" strokeWidth="1.600" />
      <text x="6" y="38" className="font-['Roboto',sans-serif]" fontSize="15" fontWeight="900">
        <tspan fill="#f58220">KHO</tspan><tspan fill="#1f2a44">BẢNVẼ</tspan>
      </text>
    </svg>
  </div>
);

export default function App() {
  return (
    <div className="relative flex h-screen w-full flex-col overflow-hidden bg-[#3b4453] font-['Roboto',sans-serif] text-[6px] leading-[9px] text-[#dfe3ea]">
      <TitleBar />
      <MenuBar />
      <Ribbon />
      <QuickAccess />
      <div className="h-[14px] shrink-0" />
      <div className="flex min-h-0 flex-1">
        <Properties />
        <div className="w-1 shrink-0 bg-[#2a313c]" />
        <Workspace />
        <div className="w-[3px] shrink-0 bg-[#2a313c]" />
        <Browser />
      </div>
      <StatusBar />
      <Logo />
      <p className="pointer-events-none absolute left-[496px] top-[238px] font-['Liberation_Sans',sans-serif] text-[21px] font-bold leading-[25px] text-[#b4b7ba]/90 [text-shadow:1px_1px_0_#999]">KhoBanVe.vn</p>
      <p className="pointer-events-none absolute left-[345px] top-[478px] whitespace-nowrap font-['Liberation_Sans',sans-serif] text-[21px] font-bold leading-[25px] text-[#c3c5c8] [text-shadow:1px_1px_0_#666]">Copyright © KhoBanVe.vn</p>
    </div>
  );
}
